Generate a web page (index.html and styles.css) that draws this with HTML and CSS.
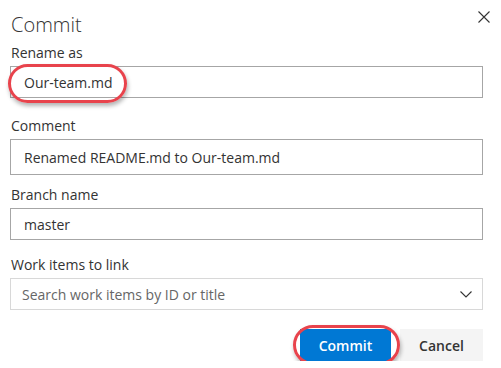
FILE: index.html
```html
<!DOCTYPE html>
<html lang="en">
<head>
  <meta charset="UTF-8">
  <title>Commit</title>
  <link rel="stylesheet" href="styles.css">
</head>
<body>
  <div class="dialog">
    <div class="header">
      <h1>Commit</h1>
      <button class="close" type="button" aria-label="Close">
        <svg width="12" height="12" viewBox="0 0 12 12"><path d="M0.5 0.5 L11.5 11.5 M11.5 0.5 L0.5 11.5" stroke="#333" stroke-width="1.1" fill="none"/></svg>
      </button>
    </div>

    <div class="field field-rename">
      <label for="rename">Rename as</label>
      <div class="box">
        <input type="text" id="rename" value="Our-team.md">
        <span class="mark mark-rename"></span>
      </div>
    </div>

    <div class="field field-comment">
      <label for="comment">Comment</label>
      <div class="box">
        <input type="text" id="comment" class="tall" value="Renamed README.md to Our-team.md">
      </div>
    </div>

    <div class="field field-branch">
      <label for="branch">Branch name</label>
      <div class="box">
        <input type="text" id="branch" value="master">
      </div>
    </div>

    <div class="field field-work">
      <label for="work">Work items to link</label>
      <div class="select">
        <span class="placeholder">Search work items by ID or title</span>
        <svg width="12" height="7" viewBox="0 0 12 7"><path d="M0.5 0.5 L6 6 L11.5 0.5" stroke="#333" stroke-width="1.1" fill="none"/></svg>
      </div>
    </div>

    <div class="actions">
      <div class="btn-wrap">
        <button class="btn primary" type="button">Commit</button>
        <span class="mark mark-commit"></span>
      </div>
      <button class="btn" type="button">Cancel</button>
    </div>
  </div>
</body>
</html>
```

FILE: styles.css
```css
body {
  margin: 0;
  background-color: #ffffff;
  color: #333333;
  font-family: "Open Sans", "Noto Sans", sans-serif;
}

.dialog {
  padding: 11px 18px 0 10px;
  display: flex;
  flex-direction: column;
}

.header {
  display: flex;
  justify-content: space-between;
  align-items: flex-start;
}

h1 {
  margin: 0 0 0 1px;
  font-size: 20px;
  font-weight: 300;
  line-height: 28px;
}

.close {
  border: none;
  background: none;
  padding: 0;
  margin: 0 -7px 0 0;
  width: 12px;
  height: 12px;
  display: flex;
}

.field {
  display: flex;
  flex-direction: column;
}

.field label {
  font-size: 14px;
  line-height: 20px;
  margin: 0 0 3px 1px;
}

.field-rename { margin-top: 4px; }
.field-comment { margin-top: 18px; }
.field-branch { margin-top: 10px; }
.field-work { margin-top: 15px; }

.box {
  position: relative;
}

input[type="text"] {
  box-sizing: border-box;
  width: 100%;
  height: 32px;
  padding: 0 13px;
  border: 1px solid #a6a6a6;
  font-family: inherit;
  font-size: 14px;
  color: #333333;
  outline: none;
}

input.tall {
  height: 36px;
}

.select {
  box-sizing: border-box;
  height: 32px;
  padding: 0 10px 0 13px;
  border: 1px solid #d8d8d8;
  display: flex;
  align-items: center;
  justify-content: space-between;
}

.placeholder {
  font-size: 14px;
  color: #666666;
  margin-left: -2px;
}

.actions {
  display: flex;
  justify-content: flex-end;
  gap: 9px;
  margin-top: 19px;
}

.btn-wrap {
  position: relative;
  display: flex;
}

.btn {
  height: 32px;
  min-width: 83px;
  padding: 0 16px;
  border: none;
  background-color: #f4f4f4;
  color: #333333;
  font-family: inherit;
  font-size: 14px;
  font-weight: 600;
}

.btn.primary {
  width: 91px;
  background-color: #0078d4;
  color: #ffffff;
}

.mark {
  position: absolute;
  border: 3px solid #e8434c;
  border-radius: 22px;
  box-shadow: 1px 3px 4px rgba(0, 0, 0, 0.3);
  pointer-events: none;
}

.mark-rename {
  left: -2px;
  top: -2px;
  width: 113px;
  height: 33px;
}

.mark-commit {
  left: -7px;
  top: -4px;
  width: 101px;
  height: 34px;
}
```
